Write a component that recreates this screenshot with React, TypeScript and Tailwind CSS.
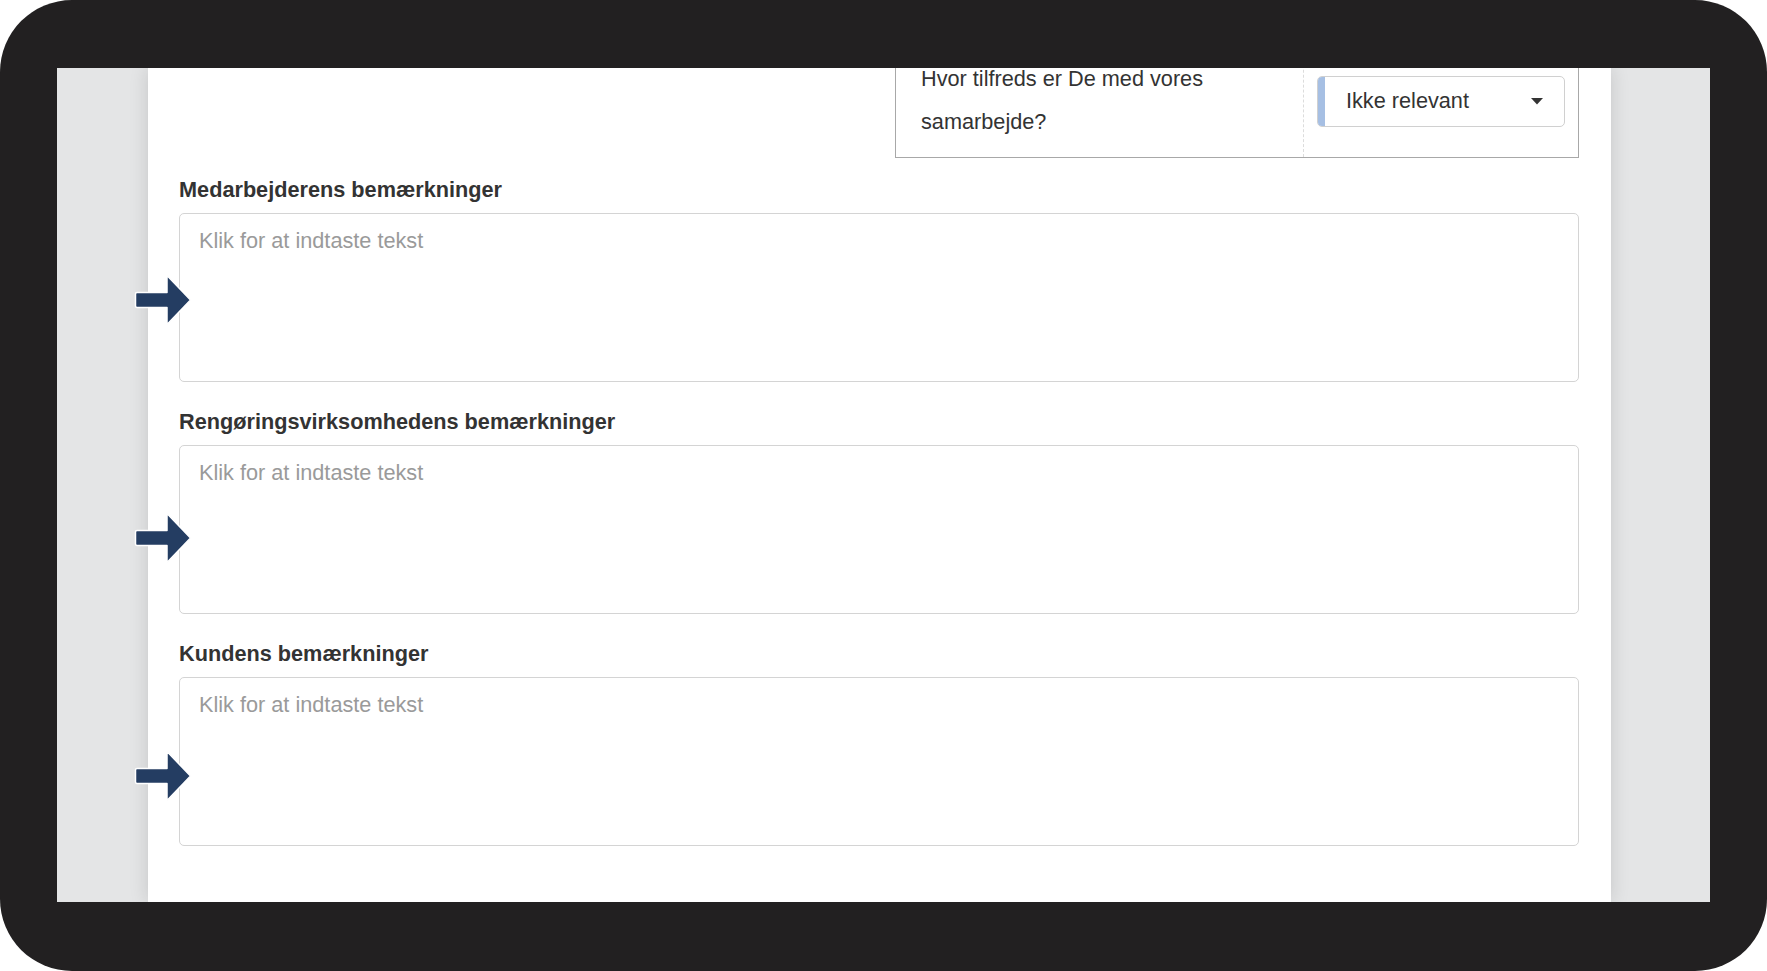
import React from 'react'

const FELTER = [
  { label: 'Medarbejderens bemærkninger', pil: 60 },
  { label: 'Rengøringsvirksomhedens bemærkninger', pil: 66 },
  { label: 'Kundens bemærkninger', pil: 72 },
]

// Mørkeblå pil der peger ind på tekstfeltet
function Pil({ top }: { top: number }) {
  return (
    <svg
      width="58"
      height="52"
      viewBox="0 0 58 52"
      className="absolute left-[-46px]"
      style={{ top }}
    >
      <path
        d="M3 18.5 H33 V1.5 L56.5 26 L33 50.5 V33.5 H3 Q1.5 33.5 1.5 32 V20 Q1.5 18.5 3 18.5 Z"
        fill="#243d62"
        stroke="#ffffff"
        strokeWidth="1.5"
        strokeLinejoin="round"
      />
    </svg>
  )
}

export default function App() {
  return (
    <div className="w-[1767px] h-[971px] bg-white font-['Liberation_Sans',Arial,sans-serif]">
      <div className="h-full rounded-[72px] bg-[#222021] pt-[68px] pb-[69px] px-[57px]">
        <div className="h-full bg-[#e4e5e6] overflow-hidden flex">
          <div className="ml-[91px] w-[1463px] h-full bg-white shadow-[0_0_18px_rgba(0,0,0,0.14)] pl-[31px] pr-[32px]">
            {/* Spørgsmålstabel (toppen er skåret af) */}
            <div className="ml-auto mt-[-24px] w-[684px] border border-[#a8a8a8] grid grid-cols-[408px_1fr]">
              <div className="pl-[25px] pr-[30px] pt-[12px] pb-[14px] text-[21.7px] leading-[43px] text-[#333] border-r border-dashed border-[#dcdcdc]">
                Hvor tilfreds er De med vores samarbejde?
              </div>
              <div className="flex items-center px-[13px]">
                <div className="w-full h-[51px] flex items-center border border-[#d0d0d0] rounded-[5px] overflow-hidden">
                  <div className="w-[7px] h-full bg-[#a6bfe3]" />
                  <span className="pl-[21px] flex-1 text-[21.7px] text-[#333]">Ikke relevant</span>
                  <svg width="12" height="7" viewBox="0 0 12 7" className="mr-[21px]">
                    <path d="M0 0 H12 L6 6.5 Z" fill="#333" />
                  </svg>
                </div>
              </div>
            </div>

            {FELTER.map((f, i) => (
              <div key={f.label} className={i === 0 ? 'mt-[19px]' : 'mt-[27px]'}>
                <div className="text-[21.7px] leading-[26px] font-bold text-[#333] mb-[10px]">{f.label}</div>
                <div className="relative h-[169px] border border-[#d4d4d4] rounded-[5px] pt-[14px] pl-[19px]">
                  <span className="text-[21.7px] leading-[26px] text-[#9a9a9a]">Klik for at indtaste tekst</span>
                  <Pil top={f.pil} />
                </div>
              </div>
            ))}
          </div>
        </div>
      </div>
    </div>
  )
}
